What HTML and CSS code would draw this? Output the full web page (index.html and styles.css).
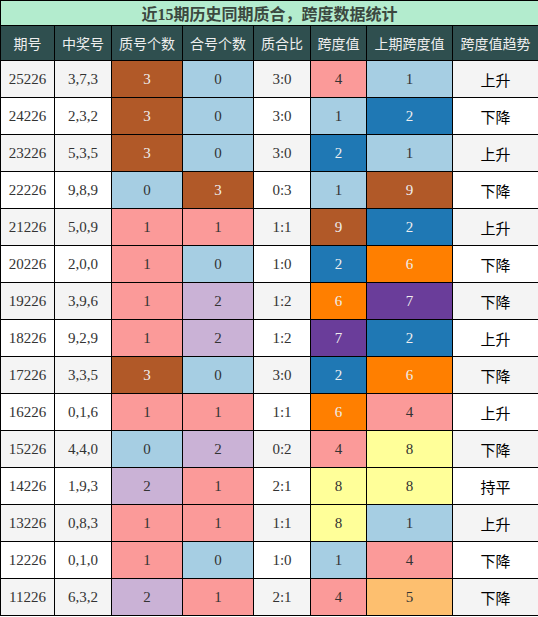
FILE: index.html
```html
<!DOCTYPE html>
<html>
<head>
  <meta charset="UTF-8">
  <title>近15期历史同期质合，跨度数据统计</title>
  <link rel="stylesheet" href="styles.css">
</head>
<body>
  <table class="stats">
    <colgroup>
      <col style="width: 54px">
      <col style="width: 57px">
      <col style="width: 71px">
      <col style="width: 71px">
      <col style="width: 57px">
      <col style="width: 56px">
      <col style="width: 86px">
      <col style="width: 86px">
    </colgroup>
    <thead>
      <tr class="title-row">
        <th colspan="8">近15期历史同期质合，跨度数据统计</th>
      </tr>
      <tr class="head-row">
        <th>期号</th>
        <th>中奖号</th>
        <th>质号个数</th>
        <th>合号个数</th>
        <th>质合比</th>
        <th>跨度值</th>
        <th>上期跨度值</th>
        <th>跨度值趋势</th>
      </tr>
    </thead>
    <tbody id="rows"></tbody>
  </table>

  <script>
    // period, numbers, prime count, composite count, ratio, span, last span, trend
    const data = [
      ["25226", "3,7,3", 3, 0, "3:0", 4, 1, "上升"],
      ["24226", "2,3,2", 3, 0, "3:0", 1, 2, "下降"],
      ["23226", "5,3,5", 3, 0, "3:0", 2, 1, "上升"],
      ["22226", "9,8,9", 0, 3, "0:3", 1, 9, "下降"],
      ["21226", "5,0,9", 1, 1, "1:1", 9, 2, "上升"],
      ["20226", "2,0,0", 1, 0, "1:0", 2, 6, "下降"],
      ["19226", "3,9,6", 1, 2, "1:2", 6, 7, "下降"],
      ["18226", "9,2,9", 1, 2, "1:2", 7, 2, "上升"],
      ["17226", "3,3,5", 3, 0, "3:0", 2, 6, "下降"],
      ["16226", "0,1,6", 1, 1, "1:1", 6, 4, "上升"],
      ["15226", "4,4,0", 0, 2, "0:2", 4, 8, "下降"],
      ["14226", "1,9,3", 2, 1, "2:1", 8, 8, "持平"],
      ["13226", "0,8,3", 1, 1, "1:1", 8, 1, "上升"],
      ["12226", "0,1,0", 1, 0, "1:0", 1, 4, "下降"],
      ["11226", "6,3,2", 2, 1, "2:1", 4, 5, "下降"]
    ];

    // colour classes for count columns and span columns
    const countColor = { 0: "c-lblue", 1: "c-pink", 2: "c-lpurple", 3: "c-brown" };
    const spanColor = {
      1: "c-lblue", 2: "c-blue", 4: "c-pink", 5: "c-lorange",
      6: "c-orange", 7: "c-purple", 8: "c-yellow", 9: "c-brown"
    };

    const tbody = document.getElementById("rows");
    data.forEach(row => {
      const tr = document.createElement("tr");
      tr.innerHTML =
        `<td class="num">${row[0]}</td>` +
        `<td class="num">${row[1]}</td>` +
        `<td class="num ${countColor[row[2]]}">${row[2]}</td>` +
        `<td class="num ${countColor[row[3]]}">${row[3]}</td>` +
        `<td class="num">${row[4]}</td>` +
        `<td class="num ${spanColor[row[5]]}">${row[5]}</td>` +
        `<td class="num ${spanColor[row[6]]}">${row[6]}</td>` +
        `<td class="trend">${row[7]}</td>`;
      tbody.appendChild(tr);
    });
  </script>
</body>
</html>
```

FILE: styles.css
```css
body {
  margin: 0;
  background: white;
}

.stats {
  width: 538px;
  table-layout: fixed;
  border-collapse: collapse;
  font-family: "Liberation Serif", "Noto Sans CJK SC", serif;
}

.stats th,
.stats td {
  border: 1px solid #000;
  padding: 0;
  text-align: center;
}

.title-row th {
  height: 24px;
  background: #b3ecce;
  color: #3b4840;
  font-size: 16px;
  font-weight: bold;
  font-family: "Liberation Serif", "Noto Sans CJK SC", serif;
}

.head-row th {
  height: 34px;
  background: #2f4f4f;
  color: #eeeeee;
  font-size: 14px;
  font-weight: normal;
  font-family: "Noto Sans CJK SC", sans-serif;
}

.stats td {
  height: 36px;
  color: #333;
}

.stats tbody tr:nth-child(odd) {
  background: #f4f4f4;
}

.stats tbody tr:nth-child(even) {
  background: #ffffff;
}

.num {
  font-size: 15px;
}

.stats td.trend {
  font-size: 15px;
  color: #000;
  font-family: "Noto Sans CJK SC", sans-serif;
}

.c-lblue { background: #a6cee3; }
.c-pink { background: #fb9a99; }
.c-lorange { background: #fdbf6f; }
.c-lpurple { background: #cab2d6; }
.c-yellow { background: #ffff99; }
.stats td.c-blue { background: #1f78b4; color: #eee; }
.stats td.c-orange { background: #ff7f00; color: #eee; }
.stats td.c-purple { background: #6a3d9a; color: #eee; }
.stats td.c-brown { background: #b15928; color: #eee; }
```
